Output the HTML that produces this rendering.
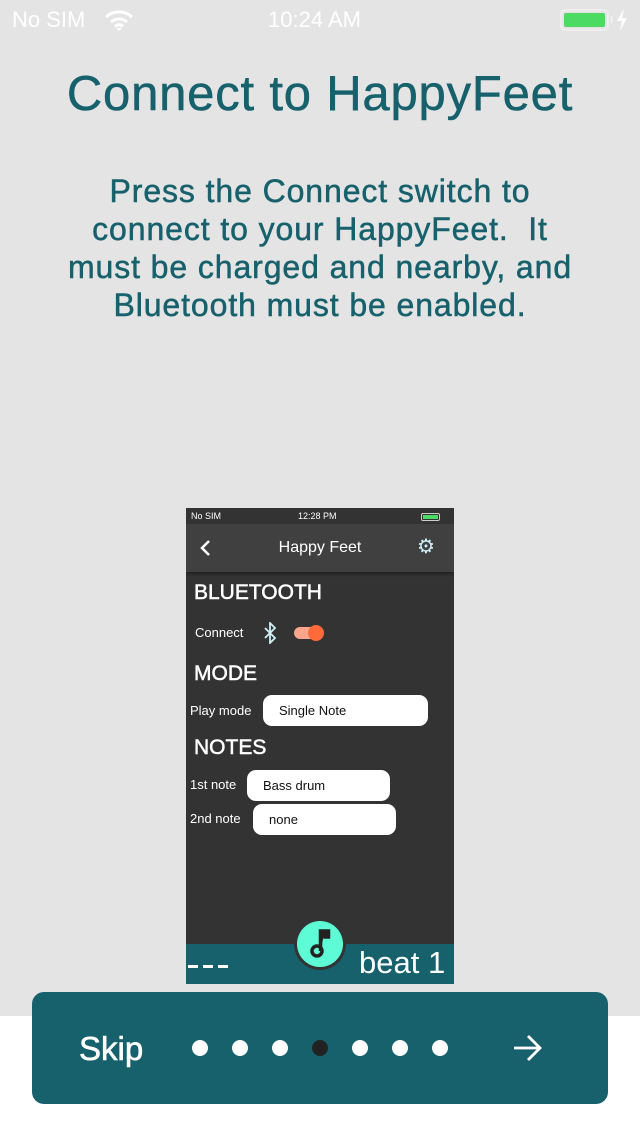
<!DOCTYPE html>
<html><head><meta charset="utf-8"><style>
*{margin:0;padding:0;box-sizing:border-box}
body{width:640px;height:1136px;background:#fff;font-family:"Liberation Sans",sans-serif;position:relative;overflow:hidden}
.bg{position:absolute;left:0;top:0;width:640px;height:1016px;background:#e4e4e4}
.abs{position:absolute}
.sb{color:#fff;font-size:22px;top:7px}
h1{position:absolute;top:66px;left:0;width:640px;text-align:center;color:#17616c;font-size:49px;font-weight:normal;letter-spacing:0.8px;-webkit-text-stroke:0.5px #17616c}
.p{position:absolute;top:172px;left:0;width:640px;text-align:center;color:#17616c;font-size:32px;line-height:38px;letter-spacing:0.9px;white-space:nowrap;-webkit-text-stroke:0.5px #17616c}
.ph{position:absolute;left:186px;top:508px;width:268px;height:476px;background:#333;overflow:hidden;color:#fff}
.nav{position:absolute;left:0;top:16px;width:268px;height:48px;background:#404040;box-shadow:0 2px 3px rgba(0,0,0,.4)}
.sel{position:absolute;background:#fff;border-radius:9px;color:#111;font-size:13px;padding-left:16px;line-height:31px;height:31px}
.card{position:absolute;left:32px;top:992px;width:576px;height:112px;background:#17616c;border-radius:12px}
.dot{position:absolute;top:48px;width:16px;height:16px;border-radius:50%;background:#fff}
.hd{position:absolute;left:8px;font-size:21px;-webkit-text-stroke:0.5px #fff}
</style></head><body>
<div class="bg"></div>
<div class="abs sb" style="left:12px">No SIM</div>
<svg class="abs" style="left:104px;top:9px" width="30" height="22" viewBox="0 0 30 22"><path d="M2 8a19 19 0 0 1 26 0M7 13a12 12 0 0 1 16 0M11 17.5a5.5 5.5 0 0 1 8 0" stroke="#fff" stroke-width="3" fill="none"/><path d="M12 19l3 3 3-3z" fill="#fff"/></svg>
<div class="abs sb" style="left:268px">10:24 AM</div>
<div class="abs" style="left:560px;top:9px;width:49px;height:22px;border:2px solid #eee;border-radius:5px;padding:2px"><div style="width:100%;height:100%;background:#4cd964;border-radius:2px"></div></div>
<div class="abs" style="left:610px;top:16px;width:3px;height:7px;background:#eee"></div>
<svg class="abs" style="left:616px;top:9px" width="12" height="22"><path d="M8 0L1 12h5l-2 10 7-13H6z" fill="#fff"/></svg>
<h1>Connect to HappyFeet</h1>
<div class="p">Press the Connect switch to<br>connect to your HappyFeet.&nbsp; It<br>must be charged and nearby, and<br>Bluetooth must be enabled.</div>
<div class="ph">
 <div class="abs" style="left:5px;top:3px;font-size:9px">No SIM</div>
 <div class="abs" style="left:112px;top:3px;font-size:9px">12:28 PM</div>
 <div class="abs" style="left:235px;top:5px;width:19px;height:8px;border:1px solid #ccc;border-radius:2px;padding:1px"><div style="background:#4cd964;height:100%"></div></div>
 <div class="nav">
  <svg class="abs" style="left:13px;top:15px" width="12" height="18"><path d="M10 2L3 9l7 7" stroke="#fff" stroke-width="2.5" fill="none"/></svg>
  <div class="abs" style="left:0;width:268px;text-align:center;top:15px;font-size:16px">Happy Feet</div>
  <div class="abs" style="left:231px;top:10px;font-size:20px;color:#cdeff5">⚙</div>
 </div>
 <div class="hd" style="top:73px">BLUETOOTH</div>
 <div class="abs" style="left:9px;top:117px;font-size:13px">Connect</div>
 <svg class="abs" style="left:77px;top:114px" width="14" height="22"><path d="M2 6l10 10-5 5V1l5 5-10 10" stroke="#cdeff5" stroke-width="1.8" fill="none"/></svg>
 <div class="abs" style="left:108px;top:119px;width:26px;height:12px;border-radius:6px;background:#f9a68c"></div>
 <div class="abs" style="left:122px;top:117px;width:16px;height:16px;border-radius:50%;background:#ff6a3b"></div>
 <div class="hd" style="top:154px">MODE</div>
 <div class="abs" style="left:4px;top:195px;font-size:13px">Play mode</div>
 <div class="sel" style="left:77px;top:187px;width:165px">Single Note</div>
 <div class="hd" style="top:228px">NOTES</div>
 <div class="abs" style="left:4px;top:269px;font-size:13px">1st note</div>
 <div class="sel" style="left:61px;top:262px;width:143px">Bass drum</div>
 <div class="abs" style="left:4px;top:303px;font-size:13px">2nd note</div>
 <div class="sel" style="left:67px;top:296px;width:143px">none</div>
 <div class="abs" style="left:0;top:436px;width:268px;height:40px;background:#17616c"></div>
 <div class="abs" style="left:2px;top:457px;width:10px;height:3px;background:#fff"></div>
 <div class="abs" style="left:17px;top:457px;width:10px;height:3px;background:#fff"></div>
 <div class="abs" style="left:32px;top:457px;width:10px;height:3px;background:#fff"></div>
 <div class="abs" style="left:173px;top:437px;font-size:31px">beat 1</div>
 <div class="abs" style="left:108px;top:410px;width:52px;height:52px;border-radius:50%;background:#333"></div>
 <div class="abs" style="left:111px;top:413px;width:46px;height:46px;border-radius:50%;background:#5efcd6"></div>
 <svg class="abs" style="left:121px;top:419px" width="26" height="34"><circle cx="10" cy="24" r="5" stroke="#222" stroke-width="3.5" fill="none"/><path d="M13.5 24V4h8v6h-5" stroke="#222" stroke-width="3.5" fill="#222"/></svg>
</div>
<div class="card">
 <div class="abs" style="left:47px;top:38px;color:#fff;font-size:33px;-webkit-text-stroke:0.6px #fff">Skip</div>
 <div class="dot" style="left:160px"></div><div class="dot" style="left:200px"></div><div class="dot" style="left:240px"></div>
 <div class="dot" style="left:280px;background:#222"></div>
 <div class="dot" style="left:320px"></div><div class="dot" style="left:360px"></div><div class="dot" style="left:400px"></div>
 <svg class="abs" style="left:480px;top:41px" width="32" height="30"><path d="M2 15h26M16 3l12 12-12 12" stroke="#fff" stroke-width="2.8" fill="none"/></svg>
</div>
</body></html>
